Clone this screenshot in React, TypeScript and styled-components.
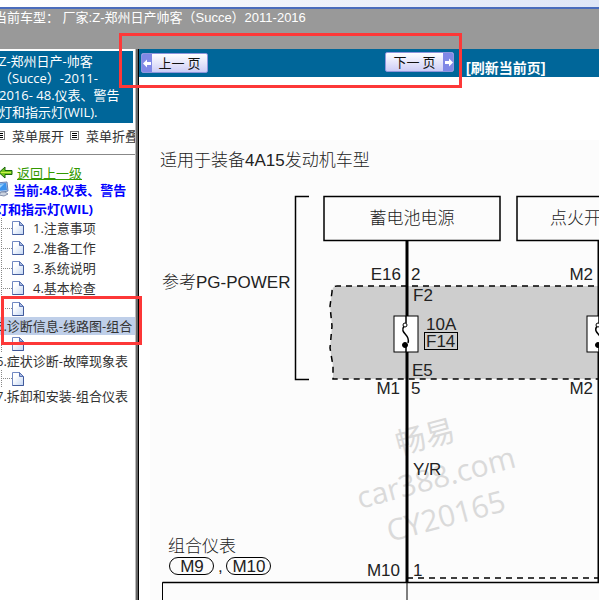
import React from "react";
import styled, { createGlobalStyle } from "styled-components";

const GlobalStyle = createGlobalStyle`
  * { box-sizing: border-box; }
  body {
    margin: 0;
    overflow: hidden;
    background: #fff;
    font-family: "Open Sans", "Noto Sans CJK SC", sans-serif;
    font-size: 13px;
    color: #333;
  }
  button { font: inherit; color: inherit; cursor: pointer; }
`;

const Page = styled.div`
  position: relative;
  display: flex;
  flex-direction: column;
  height: 100vh;
  overflow: hidden;
`;

const WindowEdge = styled.div`
  flex: none;
  height: 9px;
  background: linear-gradient(to right, #fff, #dfe6f7);
  border-bottom: 2px solid #4a6cbc;
`;

const Banner = styled.header`
  flex: none;
  height: 40px;
  background: #999;
  color: #fff;
  font-family: "Liberation Sans", "Noto Sans CJK SC", sans-serif;
  line-height: 17px;
  white-space: pre;
`;

const BannerText = styled.div`
  margin-left: -6px;
`;

const Frames = styled.div`
  flex: 1;
  min-height: 0;
  display: grid;
  grid-template-columns: 135px 4px minmax(0, 1fr);
`;

const Sidebar = styled.nav`
  overflow: hidden;
  padding-top: 2px;
  background: #fff;
  white-space: nowrap;
`;

const Divider = styled.div`
  background: #666;
  border-left: 1px solid #bbb;
  border-right: 1px solid #000;
`;

const SectionTitle = styled.h1`
  margin: 0 2px 0 -1px;
  padding: 2px 0;
  background: #069;
  color: #fff;
  font-size: 13px;
  font-weight: 400;
  line-height: 17px;
`;

const MenuRow = styled.div`
  display: flex;
  gap: 6px;
  height: 32px;
  padding-bottom: 6px;
  border-bottom: 1px solid #888;
`;

const MenuButton = styled.button`
  display: flex;
  flex: none;
  align-items: center;
  gap: 7px;
  padding: 0;
  border: 0;
  background: none;
  &:first-child { margin-left: -4px; }
`;

const Tree = styled.div`
  padding-top: 9px;
  line-height: 20px;
`;

const BackRow = styled.div`
  display: flex;
  align-items: center;
  gap: 4px;
  height: 17px;
  margin-left: -2px;
`;

const BackLink = styled.a`
  color: #390;
  text-decoration: underline;
`;

const Current = styled.div`
  height: 37px;
  margin-left: -5px;
  color: #00f;
  font-weight: 700;
  line-height: 19px;
  svg { margin-right: 4px; vertical-align: top; }
`;

const List = styled.ul`
  margin: 0 0 2px;
  padding: 0;
  list-style: none;
`;

const Item = styled.li<{ $stacked?: boolean }>`
  display: flex;
  flex-direction: ${(p) => (p.$stacked ? "column" : "row")};
  gap: ${(p) => (p.$stacked ? "0" : "8px")};
`;

const Branch = styled.span<{ $height: number }>`
  display: flex;
  align-items: center;
  flex: none;
  width: 24px;
  height: ${(p) => p.$height}px;
  margin-left: 1px;
  background: linear-gradient(#888 50%, transparent 50%) 0 0 / 1px 2px repeat-y;
  &::before {
    content: "";
    width: 11px;
    border-top: 1px dotted #888;
  }
`;

const ItemLink = styled.a<{ $wide?: boolean; $active?: boolean }>`
  color: #333;
  text-decoration: none;
  line-height: ${(p) => (p.$wide ? "18px" : "20px")};
  background: ${(p) => (p.$active ? "#bfcfe9" : "transparent")};
  margin-left: ${(p) => (p.$wide ? "-4px" : "0")};
`;

const Main = styled.main`
  display: flex;
  flex-direction: column;
  overflow: hidden;
  background: #fff;
`;

const PageBar = styled.div`
  display: grid;
  grid-template-columns: 244px 81px auto;
  justify-content: start;
  flex: none;
  height: 28px;
  padding: 3px 0 0 2px;
  background: #069;
`;

const PageButton = styled.button<{ $next?: boolean }>`
  display: flex;
  flex-direction: ${(p) => (p.$next ? "row-reverse" : "row")};
  align-items: stretch;
  width: ${(p) => (p.$next ? "69px" : "67px")};
  height: 20px;
  margin-top: ${(p) => (p.$next ? "0" : "1px")};
  padding: 0;
  border: 1px solid #8f96dc;
  border-radius: 2px;
  background: linear-gradient(#fff, #cdcdf6);
  color: #111;
  line-height: 17px;
  overflow: hidden;
`;

const PageButtonText = styled.span`
  flex: 1;
  text-align: center;
  font-family: "Noto Sans CJK SC", sans-serif;
`;

const ArrowBox = styled.span`
  display: flex;
  align-items: center;
  justify-content: center;
  width: 10px;
  background: #8088e6;
`;

const RefreshLink = styled.a`
  padding-top: 7px;
  color: #fff;
  font-family: "Liberation Sans", "Noto Sans CJK SC", sans-serif;
  font-size: 14px;
  font-weight: 700;
  line-height: 18px;
  text-decoration: none;
`;

const Drawing = styled.svg`
  flex: none;
  font-family: "Liberation Sans", "Noto Sans CJK SC", sans-serif;
  font-size: 17px;
  font-weight: 300;
`;

const Highlight = styled.div<{ $x: number; $y: number; $w: number; $h: number }>`
  position: absolute;
  left: ${(p) => p.$x}px;
  top: ${(p) => p.$y}px;
  width: ${(p) => p.$w}px;
  height: ${(p) => p.$h}px;
  border: 3px solid #fd3838;
  pointer-events: none;
`;

const ListIcon = () => (
  <svg width="9" height="9" viewBox="0 0 9 9" shapeRendering="crispEdges" aria-hidden="true">
    <rect x="0.5" y="0.5" width="8" height="8" fill="#fff" stroke="#777" />
    <path d="M2 2.5h5M2 4.5h5M2 6.5h5" stroke="#000" />
  </svg>
);

const DocIcon = () => (
  <svg width="12" height="14" viewBox="0 0 12 14" aria-hidden="true">
    <defs>
      <linearGradient id="sheet" x1="0" y1="0" x2="1" y2="1">
        <stop offset="0.3" stopColor="#fff" />
        <stop offset="1" stopColor="#c3d6f3" />
      </linearGradient>
    </defs>
    <path d="M0.5 0.5h7l4 4v9h-11z" fill="url(#sheet)" stroke="#7189c2" />
    <path d="M11.5 4.5v9h-11" fill="none" stroke="#425b9c" />
    <path d="M7.5 0.5v4h4z" fill="#a6b9e0" stroke="#5871b2" />
  </svg>
);

const BackIcon = () => (
  <svg width="15" height="13" viewBox="0 0 15 13" aria-hidden="true">
    <path d="M1 6.5L7 1v3.5h7v4H7V12z" fill="#73c51b" stroke="#17650c" />
    <path d="M3 6.5h10" stroke="#caef4b" />
  </svg>
);

const ComputerIcon = () => (
  <svg width="14" height="16" viewBox="0 0 14 16" aria-hidden="true">
    <path d="M1 2l11-1 1 9-10 2z" fill="#b7c7e2" stroke="#6681b4" />
    <path d="M2 3l9-1 1 7-9 1z" fill="#3b93ed" />
    <path d="M3 4l6-1-5 5z" fill="#9bd3ff" />
    <path d="M6 11h4l3 2-4 2-5-1z" fill="#ccd4e1" stroke="#8390aa" />
  </svg>
);

const ArrowIcon = ({ next = false }: { next?: boolean }) => (
  <svg width="9" height="9" viewBox="0 0 9 9" aria-hidden="true">
    <path d={next ? "M9 4.5L5 .5V3H1v3h4v2.5z" : "M0 4.5L4 .5V3h4v3H4v2.5z"} fill="#fff" />
  </svg>
);

const shortItems = ["1.注意事项", "2.准备工作", "3.系统说明", "4.基本检查"];
const longItems = [
  { text: "5.诊断信息-线路图-组合", active: true },
  { text: "6.症状诊断-故障现象表" },
  { text: "7.拆卸和安装-组合仪表" },
];

const Fuse = ({ x }: { x: number }) => (
  <g transform={`translate(${x} 316)`} stroke="#000">
    <rect x="-12" y="0" width="24" height="36" fill="#fff" />
    <path d="M0 0v7M0 28v8" strokeWidth="1.5" />
    <path d="M-2 10c-5 8 7 8 4 17" fill="none" strokeWidth="1.5" />
    <circle cx="-1" cy="9" r="2" fill="#fff" />
    <circle cx="-1" cy="29" r="2.5" fill="#000" />
  </g>
);

const WiringDiagram = () => (
  <Drawing width="620" height="560" viewBox="139 77 620 560" role="img" aria-label="组合仪表 线路图">
    <rect x="150" y="140" width="609" height="500" fill="#fcfcfc" />
    <g fill="#dadada" fontFamily='"Open Sans", "Noto Sans CJK SC", sans-serif' fontSize="30" fontWeight="400">
      <text transform="translate(399 455) rotate(-15)">畅易</text>
      <text transform="translate(360 509) rotate(-15)">car388.com</text>
      <text transform="translate(390 542) rotate(-15)">CY20165</text>
    </g>
    <path
      d="M759 286H337q-5 0-5 6l-2 14 2 20-2 22 3 18v13H759"
      fill="#cecece"
      stroke="#000"
      strokeWidth="1.5"
      strokeDasharray="6 5"
    />
    <g fill="none" stroke="#000" strokeWidth="1.5">
      <path d="M309 196.500H295.500V379.500H309" />
      <rect x="324" y="196.500" width="176" height="44" />
      <rect x="517" y="196.500" width="176" height="44" />
      <path d="M162.500 640V582.500H759M407 582V640" strokeWidth="1" />
      <path d="M162.500 582.500H759" />
      <path d="M407 578H759" strokeDasharray="6 5" />
    </g>
    <path d="M407 241V316M407 352V583M599 241V316M599 352V583" stroke="#000" strokeWidth="3" />
    <Fuse x={406} />
    <Fuse x={599} />
    <rect x="424.500" y="332.500" width="33" height="17" fill="none" stroke="#000" />
    <g fill="none" stroke="#000">
      <rect x="169.500" y="557.500" width="44" height="17" rx="8.500" />
      <rect x="226.500" y="557.500" width="44" height="17" rx="8.500" />
    </g>
    <g fill="#222">
      <text x="160" y="166">适用于装备4A15发动机车型</text>
      <text x="162" y="288">参考PG-POWER</text>
      <text x="412" y="224" textAnchor="middle">蓄电池电源</text>
      <text x="550" y="224">点火开关电源</text>
      <text x="401" y="280" textAnchor="end">E16</text>
      <text x="411" y="280">2</text>
      <text x="593" y="280" textAnchor="end">M2</text>
      <text x="413" y="301">F2</text>
      <text x="426" y="330">10A</text>
      <text x="426" y="347">F14</text>
      <text x="412" y="376">E5</text>
      <text x="400" y="394" textAnchor="end">M1</text>
      <text x="411" y="394">5</text>
      <text x="593" y="394" textAnchor="end">M2</text>
      <text x="413" y="475">Y/R</text>
      <text x="168" y="552">组合仪表</text>
      <text x="192" y="572" textAnchor="middle">M9</text>
      <text x="218" y="572">,</text>
      <text x="249" y="572" textAnchor="middle">M10</text>
      <text x="400" y="576" textAnchor="end">M10</text>
      <text x="413" y="576">1</text>
    </g>
  </Drawing>
);

export default function App() {
  return (
    <Page>
      <GlobalStyle />
      <WindowEdge />
      <Banner>
        <BannerText>当前车型： 厂家:Z-郑州日产帅客（Succe）2011-2016</BannerText>
      </Banner>
      <Frames>
        <Sidebar>
          <SectionTitle>
            Z-郑州日产-帅客
            <br />
            （Succe）-2011-
            <br />
            2016- 48.仪表、警告
            <br />
            灯和指示灯(WIL).
          </SectionTitle>
          <MenuRow>
            <MenuButton type="button"><ListIcon />菜单展开</MenuButton>
            <MenuButton type="button"><ListIcon />菜单折叠</MenuButton>
          </MenuRow>
          <Tree>
            <BackRow>
              <BackIcon />
              <BackLink href="#up">返回上一级</BackLink>
            </BackRow>
            <Current>
              <ComputerIcon />
              当前:48.仪表、警告
              <br />
              灯和指示灯(WIL)
            </Current>
            <List>
              {shortItems.map((text) => (
                <Item key={text}>
                  <Branch $height={20}><DocIcon /></Branch>
                  <ItemLink href="#item">{text}</ItemLink>
                </Item>
              ))}
            </List>
            <List>
              {longItems.map((item) => (
                <Item key={item.text} $stacked>
                  <Branch $height={17}><DocIcon /></Branch>
                  <ItemLink href="#item" $wide $active={item.active}>{item.text}</ItemLink>
                </Item>
              ))}
            </List>
          </Tree>
        </Sidebar>
        <Divider />
        <Main>
          <PageBar>
            <PageButton type="button">
              <ArrowBox><ArrowIcon /></ArrowBox>
              <PageButtonText>上一 页</PageButtonText>
            </PageButton>
            <PageButton type="button" $next>
              <ArrowBox><ArrowIcon next /></ArrowBox>
              <PageButtonText>下一 页</PageButtonText>
            </PageButton>
            <RefreshLink href="#refresh">[刷新当前页]</RefreshLink>
          </PageBar>
          <WiringDiagram />
        </Main>
      </Frames>
      <Highlight $x={119} $y={33} $w={343} $h={55} />
      <Highlight $x={1} $y={296} $w={141} $h={49} />
    </Page>
  );
}
